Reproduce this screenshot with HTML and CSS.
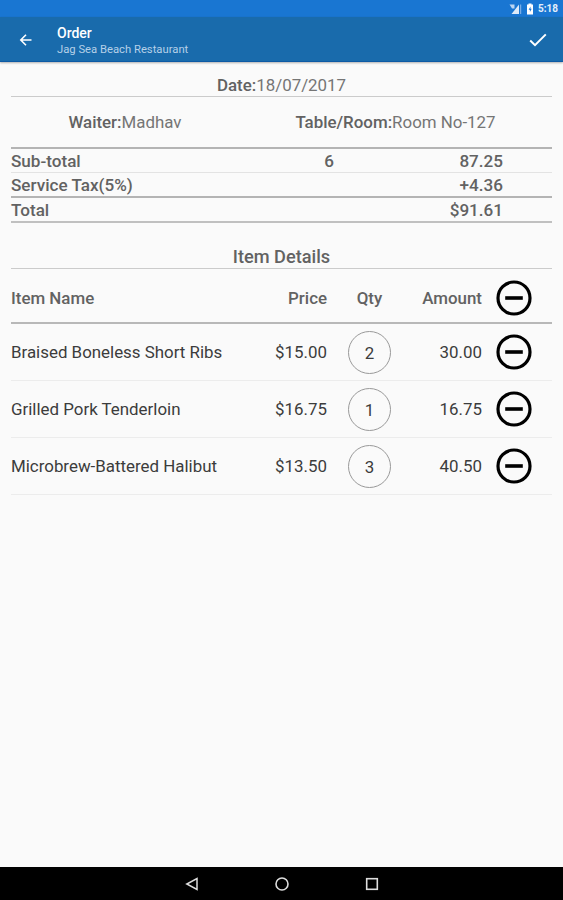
FILE: index.html
```html
<!DOCTYPE html>
<html lang="en">
<head>
    <meta charset="UTF-8">
    <meta name="viewport" content="width=device-width, initial-scale=1.0">
    <title>Order</title>
    <link rel="stylesheet" href="styles.css">
</head>
<body>
    <svg class="symbols" aria-hidden="true">
        <symbol id="icon-remove" viewBox="0 0 36 36">
            <circle cx="18" cy="18" r="16" fill="none" stroke="#000" stroke-width="3.2"/>
            <path d="M9.2 18h17.600" stroke="#000" stroke-width="3.6"/>
        </symbol>
    </svg>

    <div class="status-bar">
        <svg class="signal" viewBox="0 0 13 12">
            <path d="M10 1.5v9.5H2.5z" fill="#dce9f8"/>
            <path d="M0.5 1.5h5v4h-2.5z" fill="#b9d4f2"/>
            <path d="M11.7 1.5v9.5" stroke="#8fbbea" stroke-width="1"/>
        </svg>
        <svg class="battery" viewBox="0 0 8 12">
            <path d="M2.5 0.5h3v1h1.500v10h-6v-10h1.500z" fill="#fff"/>
            <path d="M4.6 3.5l-2 3.200h1.300v2.300l1.800-3.200h-1.300z" fill="#1976d2"/>
        </svg>
        <span class="clock">5:18</span>
    </div>

    <header class="app-bar">
        <svg class="back" viewBox="0 0 14 14">
            <path d="M12.5 7H2M7 1.8L1.8 7L7 12.2" fill="none" stroke="#fff" stroke-width="1.6"/>
        </svg>
        <div class="titles">
            <h1>Order</h1>
            <p>Jag Sea Beach Restaurant</p>
        </div>
        <svg class="done" viewBox="0 0 18 14">
            <path d="M1.2 7.5L6 12.2L16.8 1.4" fill="none" stroke="#fff" stroke-width="2"/>
        </svg>
    </header>

    <main>
        <p class="date"><b>Date:</b>18/07/2017</p>
        <div class="info">
            <p><b>Waiter:</b>Madhav</p>
            <p><b>Table/Room:</b>Room No-127</p>
        </div>

        <div class="summary">
            <div class="summary-row">
                <span>Sub-total</span>
                <span class="count">6</span>
                <span class="value">87.25</span>
            </div>
            <div class="summary-row tax">
                <span>Service Tax(5%)</span>
                <span class="count"></span>
                <span class="value">+4.36</span>
            </div>
            <div class="summary-row total">
                <span>Total</span>
                <span class="count"></span>
                <span class="value">$91.61</span>
            </div>
        </div>

        <h2>Item Details</h2>
        <div class="items">
            <div class="item-row item-head">
                <span>Item Name</span>
                <span class="price">Price</span>
                <span class="qty-label">Qty</span>
                <span class="amount">Amount</span>
                <svg class="remove"><use href="#icon-remove"/></svg>
            </div>
            <div class="item-row">
                <span>Braised Boneless Short Ribs</span>
                <span class="price">$15.00</span>
                <span class="qty">2</span>
                <span class="amount">30.00</span>
                <svg class="remove"><use href="#icon-remove"/></svg>
            </div>
            <div class="item-row">
                <span>Grilled Pork Tenderloin</span>
                <span class="price">$16.75</span>
                <span class="qty">1</span>
                <span class="amount">16.75</span>
                <svg class="remove"><use href="#icon-remove"/></svg>
            </div>
            <div class="item-row">
                <span>Microbrew-Battered Halibut</span>
                <span class="price">$13.50</span>
                <span class="qty">3</span>
                <span class="amount">40.50</span>
                <svg class="remove"><use href="#icon-remove"/></svg>
            </div>
        </div>
    </main>

    <nav class="nav-bar">
        <svg viewBox="0 0 14 14">
            <path d="M12 1.6v10.800L1.8 7z" fill="none" stroke="#ddd" stroke-width="1.5"/>
        </svg>
        <svg viewBox="0 0 14 14">
            <circle cx="7" cy="7" r="6" fill="none" stroke="#ddd" stroke-width="1.6"/>
        </svg>
        <svg viewBox="0 0 14 14">
            <rect x="1.7" y="1.7" width="10.6" height="10.6" fill="none" stroke="#ddd" stroke-width="1.6"/>
        </svg>
    </nav>
</body>
</html>
```
FILE: styles.css
```css
* {
    margin: 0;
    padding: 0;
    box-sizing: border-box;
}

body {
    display: flex;
    flex-direction: column;
    height: 100vh;
    background-color: #fafafa;
    color: #757575;
    font-family: Roboto, sans-serif;
    font-size: 16.9px;
    line-height: 20px;
    overflow: hidden;
}

svg {
    display: block;
    flex-shrink: 0;
}

.symbols {
    display: none;
}

b {
    color: #626262;
    font-weight: 500;
}

.status-bar {
    display: flex;
    justify-content: flex-end;
    align-items: center;
    height: 17px;
    padding: 1px 5px 0 0;
    background-color: #1976d2;
}

.signal {
    width: 13px;
    height: 12px;
    margin-right: 4px;
}

.battery {
    width: 8px;
    height: 12px;
    margin-right: 4px;
}

.clock {
    color: #e3eefa;
    font-size: 10px;
    font-weight: 700;
    line-height: 12px;
}

.app-bar {
    display: flex;
    align-items: center;
    height: 45px;
    padding: 2px 16px 0 19px;
    background-color: #196bac;
    border-bottom: 1px solid #0d5aa5;
    box-shadow: 0 1px 2px rgba(0, 0, 0, 0.3);
    color: #fff;
}

.back {
    width: 14px;
    height: 14px;
}

.titles {
    flex: 1;
    margin-left: 24px;
    padding-top: 2px;
}

.titles h1 {
    font-size: 14px;
    font-weight: 500;
    line-height: 17px;
}

.titles p {
    color: #b5d0e8;
    font-size: 11.25px;
    line-height: 15px;
}

.done {
    width: 18px;
    height: 14px;
}

main {
    flex: 1;
    padding: 13px 11px 0;
}

.date {
    height: 22px;
    border-bottom: 1px solid #cbcbcb;
    text-align: center;
}

.info {
    display: grid;
    grid-template-columns: 228px 1fr;
    align-items: center;
    height: 50px;
    text-align: center;
}

.summary {
    border-top: 2px solid #b4b4b4;
    border-bottom: 2px solid #c0c0c0;
    color: #626262;
    font-size: 17.1px;
    font-weight: 500;
}

.summary-row {
    display: grid;
    grid-template-columns: 300px 36px 156px;
    align-items: center;
    height: 23px;
}

.tax {
    height: 24px;
    border-top: 1px solid #e3e3e3;
}

.total {
    height: 25px;
    border-top: 2px solid #b4b4b4;
}

.count {
    text-align: center;
}

.value {
    text-align: right;
}

h2 {
    height: 46px;
    padding-top: 24px;
    border-bottom: 1px solid #cbcbcb;
    color: #626262;
    font-size: 18.2px;
    font-weight: 500;
    text-align: center;
}

.item-row {
    display: grid;
    grid-template-columns: 236px 80px 85px 70px 1fr;
    align-items: center;
    height: 57px;
    border-bottom: 1px solid #ececec;
    color: #3c3c3c;
}

.item-head {
    height: 55px;
    padding-top: 4px;
    border-bottom: 2px solid #b8b8b8;
    color: #626262;
    font-weight: 500;
}

.price,
.amount {
    text-align: right;
}

.qty-label {
    text-align: center;
}

.qty {
    justify-self: center;
    width: 43px;
    height: 43px;
    border: 1px solid #999;
    border-radius: 50%;
    line-height: 42px;
    text-align: center;
}

.remove {
    width: 36px;
    height: 36px;
    margin-left: 14px;
}

.nav-bar {
    display: flex;
    justify-content: center;
    align-items: center;
    gap: 76px;
    height: 33px;
    background-color: #000;
}

.nav-bar svg {
    width: 14px;
    height: 14px;
}
```
